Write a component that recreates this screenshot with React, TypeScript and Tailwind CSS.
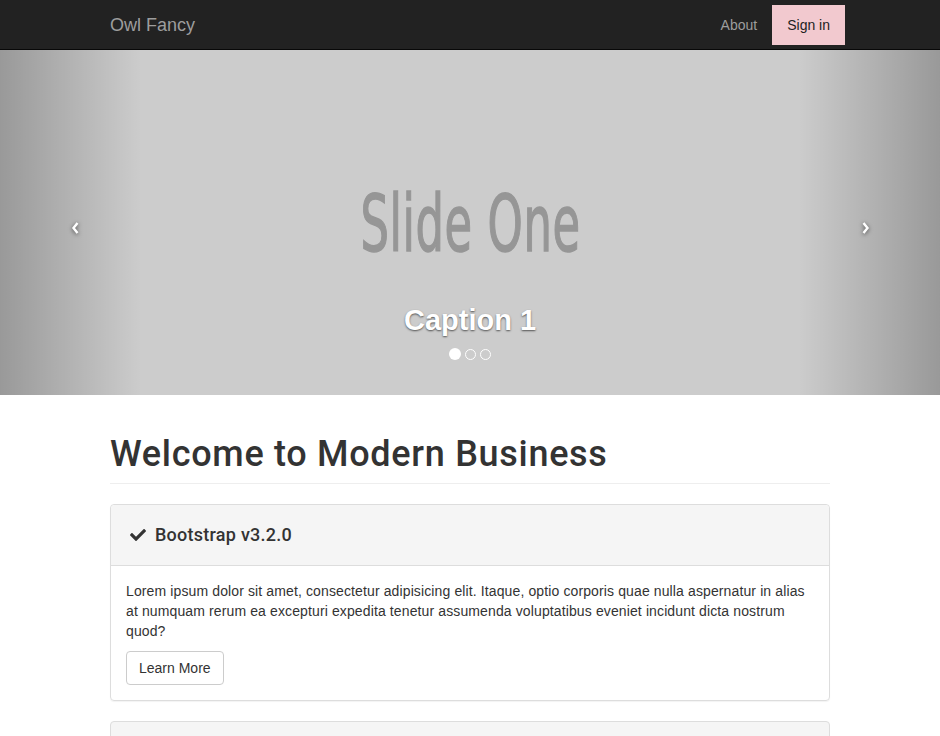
import { FaCheck } from "react-icons/fa";

const font = { fontFamily: '"Liberation Sans", Arial, sans-serif' };
const heading = { fontFamily: 'Roboto, "Liberation Sans", Arial, sans-serif' };

const Chevron = ({ dir }: { dir: "left" | "right" }) => (
  <svg width="9" height="14" viewBox="0 0 9 14" className="drop-shadow-[0_1px_2px_rgba(0,0,0,0.6)]">
    <path
      d={dir === "left" ? "M6.5 2 L2.5 7 L6.5 12" : "M2.5 2 L6.5 7 L2.5 12"}
      fill="none"
      stroke="white"
      strokeWidth="2.4"
    />
  </svg>
);

const App = () => {
  return (
    <div className="min-h-[736px] bg-white text-[#333]" style={font}>
      {/* Navbar */}
      <nav className="h-[50px] bg-[#222] border-b border-[#080808]">
        <div className="w-[750px] mx-auto px-[15px] flex items-center justify-between h-full">
          <a className="text-[18px] leading-[20px] text-[#9d9d9d]">Owl Fancy</a>
          <div className="flex items-center h-full -mr-[15px]">
            <a className="pl-[14px] pr-[15px] text-[14px] text-[#9d9d9d] mt-[1px]">About</a>
            <a className="px-[15px] h-10 flex items-center bg-[#f2c9cf] text-[14px] text-[#222] pt-[1px]">Sign in</a>
          </div>
        </div>
      </nav>

      {/* Carousel */}
      <div className="relative h-[345px] bg-[#ccc] overflow-hidden">
        <div className="absolute inset-y-0 left-0 w-[15%] bg-gradient-to-r from-black/25 to-transparent flex items-center justify-center">
          <div className="mt-[10px] ml-[9px]">
            <Chevron dir="left" />
          </div>
        </div>
        <div className="absolute inset-y-0 right-0 w-[15%] bg-gradient-to-l from-black/25 to-transparent flex items-center justify-center">
          <div className="mt-[10px] mr-[9px]">
            <Chevron dir="right" />
          </div>
        </div>
        <div className="flex justify-center pt-[134px]">
          <span
            className="text-[78px] leading-[80px] text-[#969696] scale-x-[0.575] inline-block tracking-[1px] [-webkit-text-stroke:1.5px_#969696]"
            style={{ fontFamily: '"DejaVu Sans", "Liberation Sans", sans-serif' }}
          >
            Slide One
          </span>
        </div>
        <div className="absolute left-0 right-0 bottom-[53px] text-center">
          <span className="text-[29px] font-bold text-white [text-shadow:0_1px_2px_rgba(0,0,0,0.6)]">Caption 1</span>
        </div>
        <div className="absolute left-0 right-0 bottom-[35px] flex justify-center items-center gap-[4px]">
          <span className="w-3 h-3 rounded-full bg-white" />
          <span className="w-[11px] h-[11px] rounded-full border border-white" />
          <span className="w-[11px] h-[11px] rounded-full border border-white" />
        </div>
      </div>

      {/* Content */}
      <div className="w-[750px] mx-auto px-[15px]">
        <div className="mt-[40px] pb-[9px] border-b border-[#eee] mb-[20px]">
          <h1 className="text-[36px] leading-[39px] font-medium text-[#333] tracking-[0.7px]" style={heading}>
            Welcome to Modern Business
          </h1>
        </div>

        <div className="border border-[#ddd] rounded-[4px] shadow-[0_1px_1px_rgba(0,0,0,0.05)] mb-[20px]">
          <div className="bg-[#f5f5f5] border-b border-[#ddd] rounded-t-[4px] px-[15px] py-[20px]">
            <h4
              className="flex items-center gap-[9px] text-[18px] leading-[20px] font-medium text-[#333] tracking-[0.25px]"
              style={heading}
            >
              <FaCheck className="w-[16px] h-[16px] ml-[4px]" />
              Bootstrap v3.2.0
            </h4>
          </div>
          <div className="p-[15px]">
            <p className="text-[14px] leading-[20px] mb-[10px] tracking-[0.12px]">
              Lorem ipsum dolor sit amet, consectetur adipisicing elit. Itaque, optio corporis quae nulla aspernatur in alias at numquam rerum ea excepturi expedita tenetur assumenda voluptatibus eveniet incidunt dicta nostrum quod?
            </p>
            <button className="border border-[#ccc] rounded-[4px] px-[12px] py-[6px] text-[14px] leading-[20px] text-[#333] bg-white">
              Learn More
            </button>
          </div>
        </div>

        <div className="border border-[#ddd] rounded-[4px] h-[40px] bg-[#f5f5f5]" />
      </div>
    </div>
  );
};

export default App;
